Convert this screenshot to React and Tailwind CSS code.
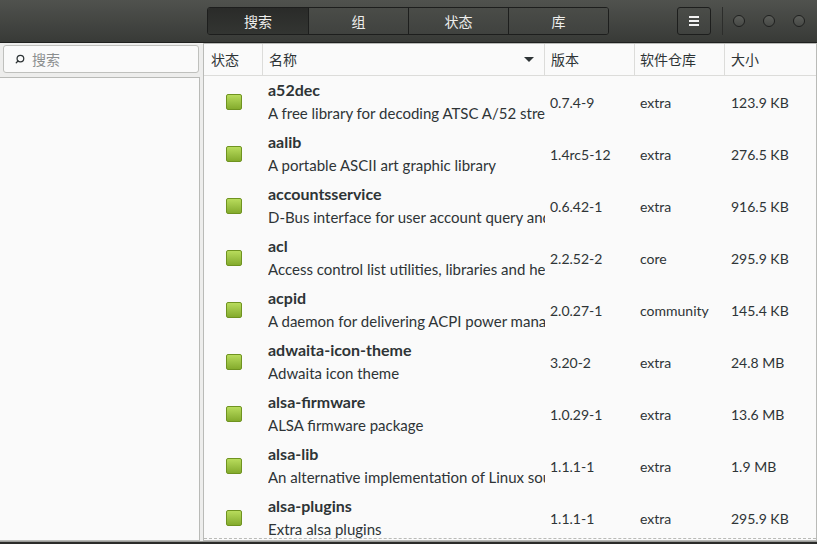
import { Search } from "lucide-react";

const packages = [
  { name: "a52dec", desc: "A free library for decoding ATSC A/52 streams", version: "0.7.4-9", repo: "extra", size: "123.9 KB" },
  { name: "aalib", desc: "A portable ASCII art graphic library", version: "1.4rc5-12", repo: "extra", size: "276.5 KB" },
  { name: "accountsservice", desc: "D-Bus interface for user account query and manipulation", version: "0.6.42-1", repo: "extra", size: "916.5 KB" },
  { name: "acl", desc: "Access control list utilities, libraries and headers", version: "2.2.52-2", repo: "core", size: "295.9 KB" },
  { name: "acpid", desc: "A daemon for delivering ACPI power management events", version: "2.0.27-1", repo: "community", size: "145.4 KB" },
  { name: "adwaita-icon-theme", desc: "Adwaita icon theme", version: "3.20-2", repo: "extra", size: "24.8 MB" },
  { name: "alsa-firmware", desc: "ALSA firmware package", version: "1.0.29-1", repo: "extra", size: "13.6 MB" },
  { name: "alsa-lib", desc: "An alternative implementation of Linux sound support", version: "1.1.1-1", repo: "extra", size: "1.9 MB" },
  { name: "alsa-plugins", desc: "Extra alsa plugins", version: "1.1.1-1", repo: "extra", size: "295.9 KB" },
];

const tabs = ["搜索", "组", "状态", "库"];

const font = { fontFamily: "Lato, 'Noto Sans CJK SC', sans-serif" };

const App = () => {
  return (
    <div
      className="w-[817px] h-[544px] flex flex-col bg-[#ededec] overflow-hidden text-[#2e3436]"
      style={font}
    >
      {/* Header bar */}
      <div className="h-[43px] shrink-0 flex items-center bg-gradient-to-b from-[#50524e] to-[#383a37] border-b border-[#1f201f]">
        <div className="ml-[207px] flex h-[28px] rounded-[3px] border border-[#1d1e1d] overflow-hidden">
          {tabs.map((t, i) => (
            <div
              key={t}
              className={
                i === 0
                  ? "w-[100px] flex items-center justify-center text-[14px] text-[#eeeeec] bg-gradient-to-b from-[#2a2b29] to-[#333532]"
                  : "w-[100px] flex items-center justify-center text-[14px] text-[#eeeeec] bg-gradient-to-b from-[#4a4c48] to-[#40423f] border-l border-[#1d1e1d]"
              }
            >
              {t}
            </div>
          ))}
        </div>
        <div className="ml-[68px] w-[34px] h-[28px] rounded-[3px] border border-[#1d1e1d] bg-gradient-to-b from-[#4a4c48] to-[#40423f] flex flex-col items-center justify-center gap-[2px]">
          <span className="block w-[10px] h-[2px] bg-[#f2f2f2]" />
          <span className="block w-[10px] h-[2px] bg-[#f2f2f2]" />
          <span className="block w-[10px] h-[2px] bg-[#f2f2f2]" />
        </div>
        <div className="ml-[11px] w-px h-[28px] bg-[#2c2d2b]" />
        <div className="ml-[10px] flex gap-[18px]">
          {[0, 1, 2].map((i) => (
            <span
              key={i}
              className="block w-[12px] h-[12px] rounded-full bg-gradient-to-b from-[#5c5e5a] to-[#474946] border border-[#1f201f]"
            />
          ))}
        </div>
      </div>

      {/* Body */}
      <div className="flex-1 flex min-h-0">
        {/* Left pane */}
        <div className="w-[200px] shrink-0 flex flex-col">
          <div className="mt-[2px] ml-[3px] mr-[1px] h-[28px] rounded-[3px] border border-[#bfc0bd] bg-[#fafafa] flex items-center pl-[11px] gap-[7px]">
            <Search size={10} strokeWidth={3} className="text-[#2e3436] -scale-x-100" />
            <span className="text-[14px] text-[#8b8e8f]">搜索</span>
          </div>
          <div className="mt-[4px] flex-1 border border-l-0 border-[#b9bab7] bg-[#fafafa]" />
        </div>

        {/* Right pane */}
        <div className="ml-[3px] flex-1 flex flex-col border border-[#b9bab7] bg-[#fafafa] min-w-0">
          <div className="h-[32px] shrink-0 grid grid-cols-[59px_282px_90px_90px_1fr] border-b border-[#dcdcda] text-[14px]">
            <div className="pl-[7px] flex items-center border-r border-[#dcdcda]">状态</div>
            <div className="pl-[6px] pr-[10px] flex items-center justify-between border-r border-[#dcdcda]">
              <span>名称</span>
              <svg width="10" height="6" viewBox="0 0 10 6">
                <path d="M0 0 L10 0 L5 5 Z" fill="#2e3436" />
              </svg>
            </div>
            <div className="pl-[6px] flex items-center border-r border-[#dcdcda]">版本</div>
            <div className="pl-[5px] flex items-center border-r border-[#dcdcda]">软件仓库</div>
            <div className="pl-[6px] flex items-center">大小</div>
          </div>

          <div className="flex-1 min-h-0 overflow-hidden border-b border-dashed border-[#b9bab7] mb-[1px]">
            {packages.map((p) => (
              <div
                key={p.name}
                className="h-[52px] grid grid-cols-[59px_282px_90px_90px_1fr] items-center text-[14px]"
              >
                <div className="pl-[22px]">
                  <span className="block w-[16px] h-[16px] rounded-[2px] border border-[#6f9320] bg-gradient-to-b from-[#b8dc5c] to-[#84ab2c]" />
                </div>
                <div className="pl-[5px] overflow-hidden whitespace-nowrap flex flex-col">
                  <span className="text-[16px] font-bold leading-[22px] text-[#2e3436]">{p.name}</span>
                  <span className="text-[15px] leading-[24px] overflow-hidden">{p.desc}</span>
                </div>
                <div className="pl-[5px]">{p.version}</div>
                <div className="pl-[5px]">{p.repo}</div>
                <div className="pl-[6px]">{p.size}</div>
              </div>
            ))}
          </div>
        </div>
      </div>

      <div className="h-[3px] shrink-0 bg-[#2b2c2a] border-t border-[#9a9b98]" />
    </div>
  );
};

export default App;
